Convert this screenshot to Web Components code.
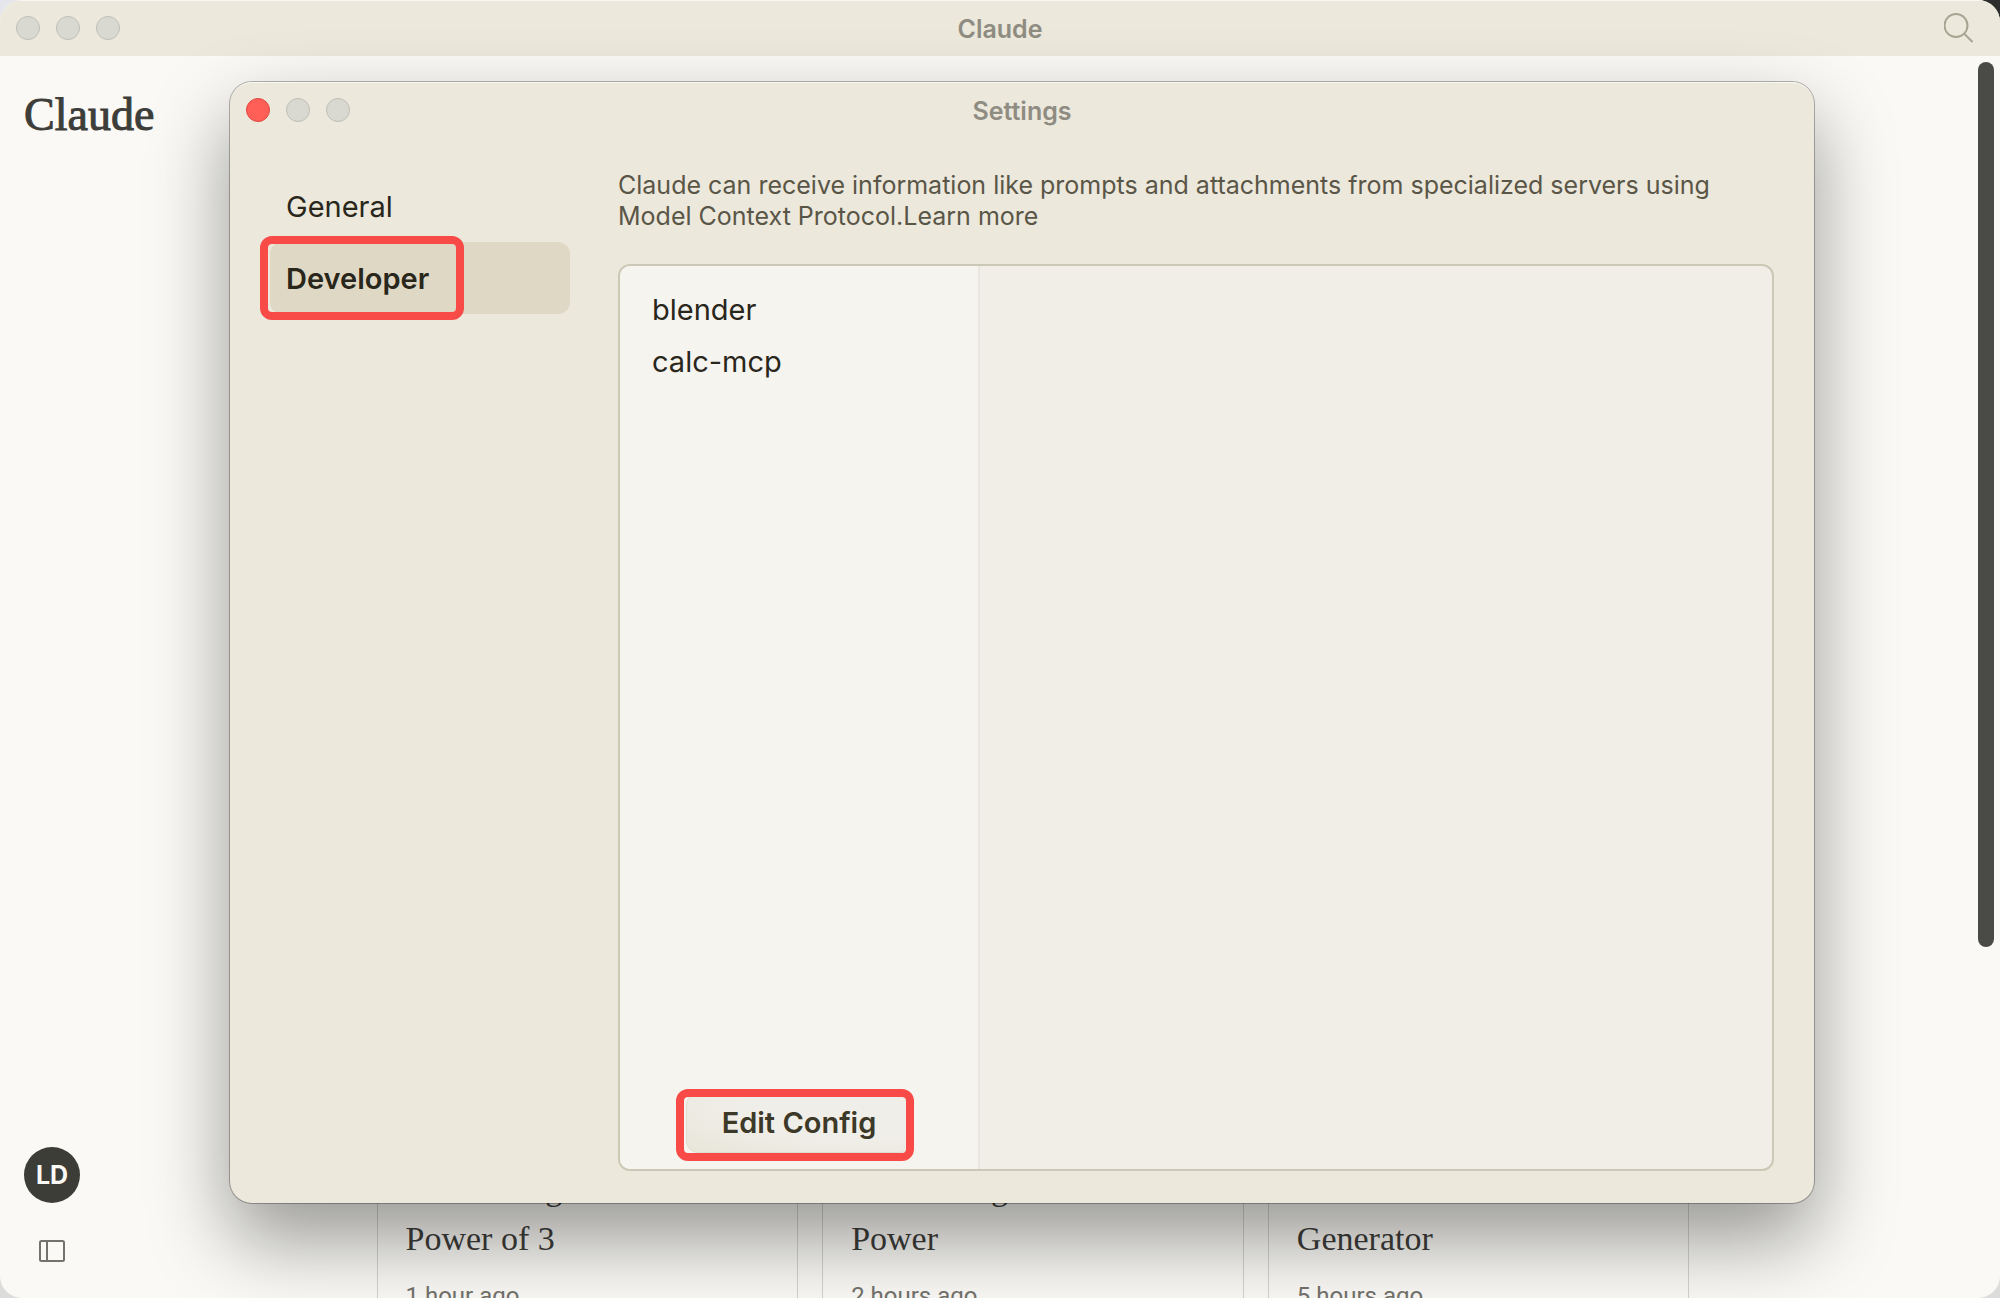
<!DOCTYPE html>
<html lang="en">
<head>
<meta charset="utf-8">
<title>Claude</title>
<style>
  html, body { height: 100%; margin: 0; }
  body {
    font-family: Inter, "Liberation Sans", sans-serif;
    overflow: hidden;
    background: linear-gradient(90deg, #e4e6ec 0 50%, #2e2d2e 50%) top / 100% 50% no-repeat, #dcdcdb;
  }
</style>
</head>
<body>
<claude-app></claude-app>

<script>
class Component extends HTMLElement {
  constructor() {
    super();
    this.attachShadow({ mode: 'open' }).innerHTML =
      '<style>*{box-sizing:border-box}</style>' + this.constructor.markup;
  }
}

customElements.define('title-bar', class extends Component {
  static markup = `
    <style>
      :host { display: grid; grid-template-columns: 1fr auto 1fr; align-items: center; height: 56px; padding: 0 16px; flex: none; box-sizing: border-box; }
      .lights { display: flex; gap: 16px; }
      button { width: 24px; height: 24px; padding: 0; border-radius: 50%; border: 1px solid #bfbfb7; background: #d9d9d2; }
      :host([active]) button:first-child { background: #ff5f57; border-color: #e2463f; }
      h1 { margin: 0; padding-top: 2px; font-size: 25px; line-height: 32px; font-weight: 600; color: #8f8c82; }
      .end { display: flex; justify-content: flex-end; }
    </style>
    <div class="lights">
      <button aria-label="Close"></button><button aria-label="Minimize"></button><button aria-label="Zoom"></button>
    </div>
    <h1><slot></slot></h1>
    <div class="end"><slot name="end"></slot></div>`;
});

customElements.define('callout-box', class extends Component {
  static markup = `
    <style>
      :host { position: absolute; border: 8px solid #f84a46; border-radius: 12px; pointer-events: none; }
    </style>`;
});

customElements.define('nav-item', class extends Component {
  static markup = `
    <style>
      :host { display: block; position: relative; }
      button { display: block; width: 100%; height: 72px; padding: 2px 16px 0; border: 0; border-radius: 12px; background: none;
        font: 400 29px/36px Inter, "Liberation Sans", sans-serif; color: #29261b; text-align: left; }
      :host([selected]) button { background: #dfd8c4; font-weight: 600; }
    </style>
    <button><slot></slot></button><slot name="callout"></slot>`;
});

customElements.define('server-panel', class extends Component {
  static markup = `
    <style>
      :host { display: flex; flex: 1; min-height: 0; border: 2px solid #cbc8b5; border-radius: 12px; overflow: hidden; background: #f0eee6; }
      .servers { display: flex; flex-direction: column; width: 360px; padding: 18px 0 16px; background: #f5f4ef; border-right: 2px solid #e8e6de; }
      ul { list-style: none; margin: 0; padding: 0; flex: 1; }
      li { padding: 8px 32px; font-size: 29px; line-height: 36px; color: #29261b; }
      .action { position: relative; align-self: center; width: 226px; }
      .action button { display: block; width: 100%; height: 60px; padding: 0; border: 1px solid #e0ddd0; border-radius: 12px;
        background: radial-gradient(ellipse at 80% 20%, #f0eee8 50%, #e8e5d9);
        font: 600 29px/36px Inter, "Liberation Sans", sans-serif; color: #3d3929; }
      callout-box { inset: -4px -2px -8px -10px; }
    </style>
    <div class="servers">
      <ul><li>blender</li><li>calc-mcp</li></ul>
      <div class="action"><button>Edit Config</button><callout-box></callout-box></div>
    </div>`;
});

customElements.define('settings-window', class extends Component {
  static markup = `
    <style>
      :host { display: flex; flex-direction: column; border-radius: 22px; background: #ece8dc;
        box-shadow: inset 0 2px 0 -1px #f8f7f2, 0 0 0 1px rgba(0,0,0,.28), 0 36px 80px rgba(0,0,0,.4); }
      .body { flex: 1; min-height: 0; display: flex; gap: 48px; padding: 32px 40px; }
      nav { width: 300px; flex: none; }
      main { flex: 1; min-width: 0; display: flex; flex-direction: column; gap: 32px; }
      p { margin: 0; font-size: 25px; line-height: 31px; color: #5a5647; }
      a { color: inherit; text-decoration: none; }
      .pick { inset: -6px 106px -6px -10px; }
    </style>
    <title-bar active>Settings</title-bar>
    <div class="body">
      <nav>
        <nav-item>General</nav-item>
        <nav-item selected>Developer<callout-box class="pick" slot="callout"></callout-box></nav-item>
      </nav>
      <main>
        <p>Claude can receive information like prompts and attachments from specialized servers using Model Context Protocol.<a href="#">Learn more</a></p>
        <server-panel></server-panel>
      </main>
    </div>`;
});

customElements.define('chat-card', class extends Component {
  static markup = `
    <style>
      :host { display: flex; flex-direction: column; gap: 16px; padding: 28px; border: 1px solid #d3d2cc; border-radius: 16px; }
      h2 { margin: 0; font: 400 34px/50px "Liberation Serif", serif; color: #3d3d3a; }
      time { font-size: 24px; line-height: 32px; font-family: Roboto, sans-serif; color: #73726c; }
    </style>
    <h2><slot></slot></h2><time><slot name="time"></slot></time>`;
});

customElements.define('side-rail', class extends Component {
  static markup = `
    <style>
      :host { display: flex; flex-direction: column; align-items: flex-start; width: 180px; padding: 31px 24px; box-sizing: border-box; }
      .logo { font: 400 46px/56px "Liberation Serif", serif; color: #3d3d3a; -webkit-text-stroke: 1px #3d3d3a; flex: 1; }
      .tools { display: flex; flex-direction: column; align-items: center; gap: 32px; }
      button { border: 0; padding: 0; background: none; display: block; }
      .avatar { width: 56px; height: 56px; border-radius: 50%; background: #3d3d38; color: #faf9f5;
        font: 700 25px/56px Inter, "Liberation Sans", sans-serif; }
      svg { display: block; }
    </style>
    <div class="logo">Claude</div>
    <div class="tools">
      <button class="avatar">LD</button>
      <button aria-label="Toggle sidebar">
        <svg width="32" height="32" viewBox="0 0 32 32" fill="none" stroke="#73726c" stroke-width="2">
          <rect x="4" y="6" width="24" height="20" rx="1.5"/><path d="M11 6v20"/>
        </svg>
      </button>
    </div>`;
});

customElements.define('claude-app', class extends Component {
  static markup = `
    <style>
      :host { display: flex; flex-direction: column; position: relative; height: 100vh; overflow: hidden;
        border-radius: 22px; background: #faf9f5; }
      .top { background: #ece8dc; box-shadow: inset 0 2px 0 -1px #f8f7f2; }
      .top svg { display: block; margin-right: 8px; }
      .page { flex: 1; min-height: 0; display: flex; }
      .recent { flex: 1; min-width: 0; display: flex; flex-direction: column; justify-content: flex-end; align-items: center; padding-right: 92px; }
      .cards { display: grid; grid-template-columns: repeat(3, 1fr); gap: 24px; width: 100%; max-width: 1313px; margin-bottom: -43px; }
      .scroll { flex: none; width: 22px; padding: 6px 6px 0 0; }
      .thumb { height: 71.6%; border-radius: 8px; background: #4a4a47; width: 16px; }
      settings-window { position: absolute; top: 82px; right: 186px; bottom: 95px; left: 230px; }
    </style>
    <title-bar class="top">Claude
      <svg slot="end" width="32" height="32" viewBox="0 0 32 32" fill="none" stroke="#a8a492" stroke-width="2" stroke-linecap="round">
        <circle cx="12" cy="13.5" r="11.5"/><path d="M20.5 22L28 29.5"/>
      </svg>
    </title-bar>
    <div class="page">
      <side-rail></side-rail>
      <div class="recent">
        <div class="cards">
          <chat-card>Calculating<br>Power of 3<span slot="time">1 hour ago</span></chat-card>
          <chat-card>Calculating<br>Power<span slot="time">2 hours ago</span></chat-card>
          <chat-card>Random Number<br>Generator<span slot="time">5 hours ago</span></chat-card>
        </div>
      </div>
      <div class="scroll"><div class="thumb"></div></div>
    </div>
    <settings-window></settings-window>`;
});
</script>
</body>
</html>
